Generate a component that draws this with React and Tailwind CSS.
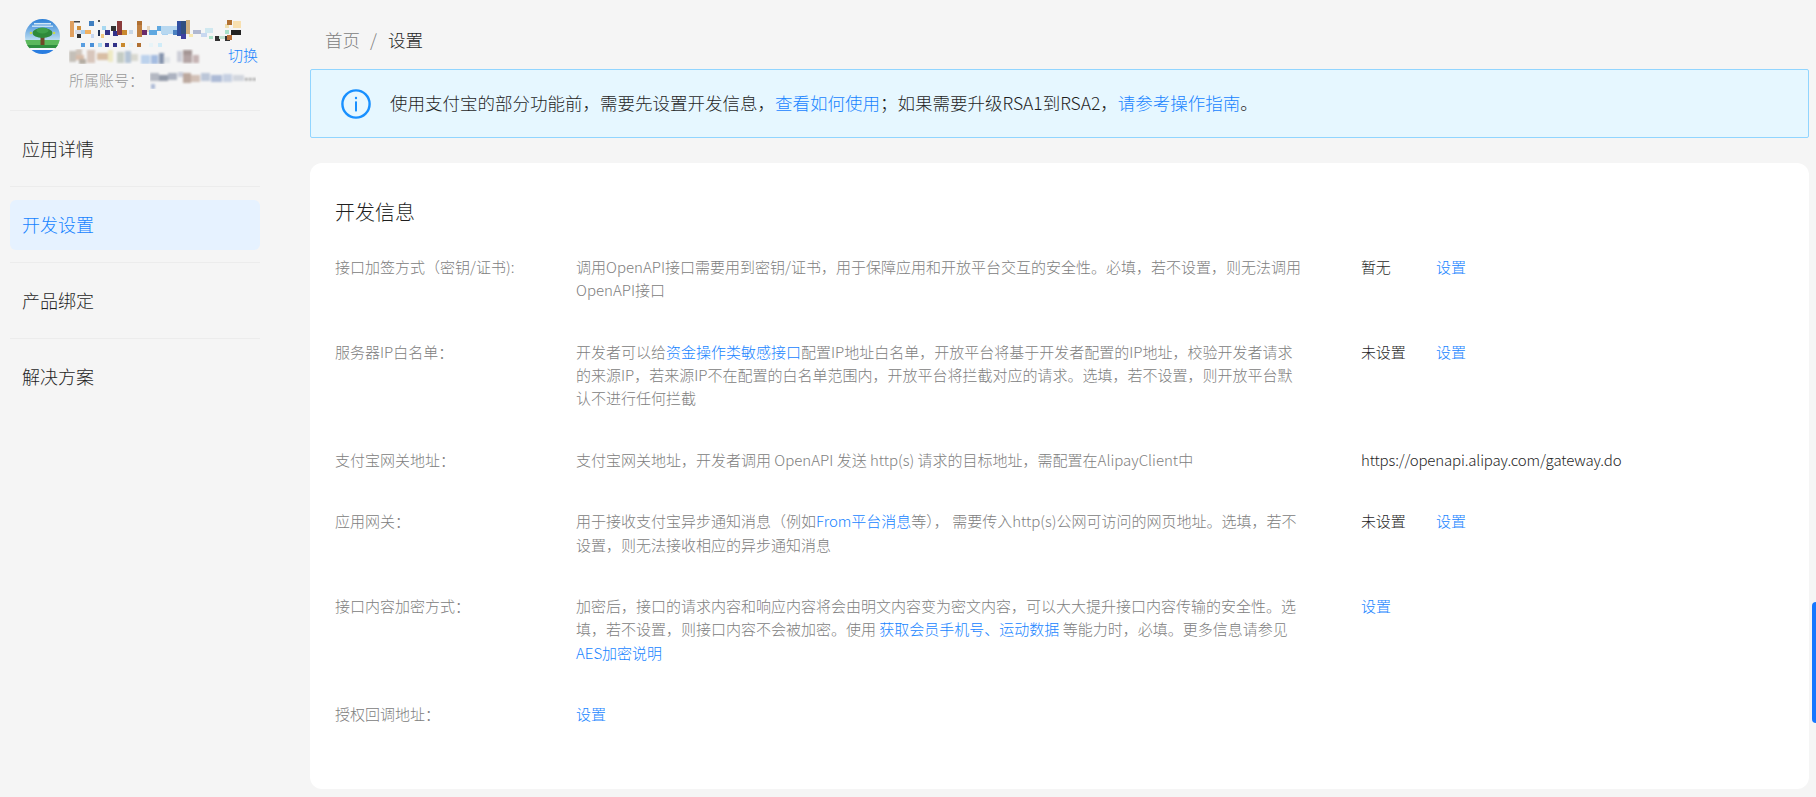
import React from 'react';

const nameCells = [
  [1, 1, 4, 16, '#e0a060'], [5, 1, 6, 1.5, '#444'], [8, 6, 4, 4, '#cf8f3a'], [8, 14, 4, 4, '#333'], [6, 10, 6, 4, '#d8dde8'],
  [20, 1, 5, 5, '#3f7fc0'], [12, 10, 6, 4, '#a6cdee'], [16, 10, 6, 4, '#f0b060'], [22, 14, 3, 4, '#c8d8f0'],
  [29, 0, 2, 2, '#555'], [29, 10, 2, 6, '#223355'], [33, 6, 4, 4, '#a8d8f0'], [36, 10, 5, 5, '#333388'], [32, 14, 3, 4, '#f0c880'],
  [42, 6, 5, 5, '#333'], [44, 11, 5, 5, '#33338a'], [48, 1, 5, 10, '#8a3a3a'], [48, 10, 5, 5, '#8a3a3a'], [53, 10, 5, 5, '#c9892f'],
  [60, 10, 4, 4, '#c8d8e8'], [68, 1, 5, 5, '#b07030'], [68, 5, 5, 12, '#c08040'], [73, 10, 5, 5, '#6a2a6a'], [78, 6, 3, 6, '#e8d8c0'],
  [80, 10, 8, 5, '#60a8e0'], [88, 6, 5, 5, '#60a8e0'], [93, 10, 6, 5, '#a8d0f0'], [98, 6, 4, 4, '#e8f0c8'],
  [92, 6, 16, 8, '#b8d8f0'], [104, 10, 4, 5, '#4a80c0'], [108, 1, 5, 15, '#3050a0'], [112, 1, 5, 16, '#305080'], [117, 0, 4, 14, '#d0b080'],
  [112, 14, 5, 5, '#4040a0'], [120, 14, 4, 3, '#f8e8b0'], [124, 10, 8, 4, '#b0b8d0'], [132, 13, 6, 4, '#c8d8f0'], [136, 8, 8, 5, '#d0e8f0'],
  [140, 16, 4, 3, '#a8e0c8'], [146, 16, 5, 5, '#333'], [150, 16, 8, 3, '#c0e0d0'], [156, 16, 5, 5, '#333'], [156, 4, 4, 4, '#f0e0b0'],
  [156, 10, 4, 4, '#a8e0c8'], [158, 0, 5, 5, '#b07030'], [162, 10, 10, 5, '#222'], [158, 15, 5, 5, '#b87038'], [164, 1, 8, 7, '#f8e0b0'],
  [12, 23, 4, 4, '#5a9ee0'], [21, 23, 4, 4, '#4a90d8'], [29, 23, 4, 4, '#a8d8f0'], [36, 23, 4, 4, '#333388'], [44, 23, 4, 4, '#333388'],
  [52, 23, 4, 4, '#c9892f'], [60, 23, 4, 4, '#e8f4f8'], [68, 23, 4, 4, '#b07030'], [80, 23, 4, 4, '#e8f4f8'], [89, 23, 4, 4, '#d0ecf8'],
];

const idCells = [
  [0, 2, 7, 11, '#c4bfb8'], [7, 0, 6, 6, '#cfc5bb'], [7, 6, 8, 5, '#d8bca8'], [10, 10, 7, 5, '#b4aca2'], [18, 1, 8, 13, '#d8c6bc'],
  [28, 4, 11, 7, '#d8bea4'], [39, 1, 5, 12, '#eeeac4'], [48, 3, 7, 11, '#c4ccc4'], [56, 2, 6, 12, '#b4c4d6'], [62, 5, 7, 7, '#d8d8d0'],
  [72, 6, 9, 9, '#bcd2ec'], [82, 6, 7, 9, '#a4bce0'], [90, 4, 5, 11, '#8694ae'], [95, 8, 6, 6, '#e0e4e8'], [108, 2, 5, 11, '#cecfd8'],
  [114, 1, 9, 6, '#a49694'], [114, 6, 9, 8, '#b4a4a4'], [124, 6, 6, 8, '#c6b4b4'],
];

const accountCells = [
  [0, 2, 9, 8, '#b4b8c2'], [9, 4, 9, 6, '#929aa8'], [18, 2, 9, 7, '#acb2c0'], [28, 1, 5, 5, '#c8ccd8'], [33, 2, 8, 10, '#bca89e'],
  [41, 4, 9, 7, '#d2c0b6'], [51, 2, 9, 8, '#bcc6d8'], [61, 4, 11, 7, '#acbad6'], [73, 3, 9, 8, '#c6d0e2'], [83, 4, 11, 6, '#d2d6de'],
  [95, 7, 2.5, 2.5, '#999'], [99, 7, 2.5, 2.5, '#999'], [103, 7, 2.5, 2.5, '#999'], [1, 13, 4, 5, '#acbad6'],
];

function Mosaic({ cells, w, h, blur = 0.7, id }) {
  return (
    <svg width={w} height={h} viewBox={`0 0 ${w} ${h}`} className="block shrink-0">
      <filter id={id}>
        <feGaussianBlur stdDeviation={blur} />
      </filter>
      <g filter={`url(#${id})`}>
        {cells.map((c, i) => (
          <rect key={i} x={c[0]} y={c[1]} width={c[2]} height={c[3]} fill={c[4]} />
        ))}
      </g>
    </svg>
  );
}

function Avatar() {
  return (
    <svg width="35" height="35" viewBox="0 0 35 35" className="block shrink-0">
      <defs>
        <clipPath id="av">
          <circle cx="17.5" cy="17.5" r="17.5" />
        </clipPath>
        <linearGradient id="sky" x1="0" y1="0" x2="0" y2="1">
          <stop offset="0" stopColor="#2c7fd6" />
          <stop offset="1" stopColor="#cfeaf5" />
        </linearGradient>
      </defs>
      <g clipPath="url(#av)">
        <rect width="35" height="24" fill="url(#sky)" />
        <rect y="21" width="35" height="8" fill="#5cb85c" />
        <rect y="26" width="35" height="4" fill="#2f8f3f" />
        <rect y="29" width="35" height="2" fill="#f4f8fa" />
        <rect y="31" width="35" height="4" fill="#2a7de0" />
        <rect x="9" y="4" width="17" height="1.5" fill="#d4e8f6" />
        <rect x="7" y="6.5" width="21" height="1.5" fill="#c4e0f4" />
        <rect x="15.5" y="17" width="4" height="9" fill="#6e4a26" />
        <ellipse cx="17.5" cy="14" rx="10" ry="5" fill="#2f8a3a" />
        <ellipse cx="17.5" cy="11.5" rx="6" ry="3" fill="#3fa04a" />
        <circle cx="6" cy="14" r="1.3" fill="#c8d850" />
        <circle cx="29" cy="14" r="1.3" fill="#c8d850" />
      </g>
    </svg>
  );
}

function InfoIcon() {
  return (
    <svg width="30" height="30" viewBox="0 0 30 30" className="block shrink-0">
      <circle cx="15" cy="15" r="13.6" fill="none" stroke="#1890ff" strokeWidth="2.4" />
      <rect x="13.9" y="7.8" width="2.2" height="2.4" rx="1" fill="#1890ff" />
      <rect x="14" y="12.4" width="2" height="10" fill="#1890ff" />
    </svg>
  );
}

const navItems = ['应用详情', '开发设置', '产品绑定', '解决方案'];

function Link({ children }) {
  return <a className="text-[#1784ff] cursor-pointer">{children}</a>;
}

function Row({ label, children, value, action }) {
  return (
    <div className="flex mb-[38.4px] text-[15px] leading-[23.2px]">
      <div className="w-[241px] shrink-0 text-[#808080]">{label}</div>
      <div className="w-[785px] shrink-0 text-[#808080]">{children}</div>
      <div className="flex text-[#1f1f1f]">
        {value && <div className="w-[75px] whitespace-nowrap tracking-[-0.01em]">{value}</div>}
        {action && <Link>设置</Link>}
      </div>
    </div>
  );
}

export default function App() {
  return (
    <div className="relative flex h-[797px] w-full overflow-hidden bg-[#f5f5f5] font-light font-['Noto_Sans_CJK_SC',sans-serif]">
      <aside className="w-[310px] shrink-0 pl-[10px]">
        <div className="w-[250px] h-[110px] pl-[15px] pt-[19px] flex gap-[9px]">
          <Avatar />
          <div className="flex-1 pt-[1px]">
            <Mosaic id="m1" cells={nameCells} w={174} h={28} />
            <div className="flex items-center h-[16px]">
              <Mosaic id="m2" cells={idCells} w={132} h={15} blur={0.8} />
              <span className="ml-auto mr-[2px] -mt-[3px] text-[15px] leading-[16px] text-[#1784ff]">切换</span>
            </div>
            <div className="flex items-center mt-[7px] h-[18px] gap-[6px]">
              <span className="text-[15px] leading-[18px] text-[#999999] whitespace-nowrap">所属账号：</span>
              <Mosaic id="m3" cells={accountCells} w={106} h={18} blur={0.9} />
            </div>
          </div>
        </div>
        <ul className="w-[250px]">
          {navItems.map((item, i) => (
            <li key={item} className="border-t border-[#ececec] py-[12.5px]">
              <div className={`h-[50px] flex items-center px-[12px] rounded-[6px] text-[18px] ${i === 1 ? 'bg-[#e6f2ff] text-[#1784ff]' : 'text-[#1f1f1f]'}`}>
                {item}
              </div>
            </li>
          ))}
        </ul>
      </aside>

      <main className="flex-1 pr-[7px]">
        <div className="h-[69px] pt-[28px] pl-[15px] flex text-[17.5px] leading-[24px]">
          <span className="text-[#808080]">首页</span>
          <span className="text-[#808080] ml-[10px] mr-[11px]">/</span>
          <span className="text-[#1f1f1f]">设置</span>
        </div>

        <div className="h-[69px] flex items-center pl-[30px] gap-[19px] bg-[#e6f7ff] border border-[#91d5ff] rounded-[2px] text-[17.5px] text-[#1f1f1f]">
          <InfoIcon />
          <p className="whitespace-nowrap">
            使用支付宝的部分功能前，需要先设置开发信息，<Link>查看如何使用</Link>；如果需要升级RSA1到RSA2，<Link>请参考操作指南</Link>。
          </p>
        </div>

        <section className="mt-[25px] h-[626px] bg-white rounded-[12px] pl-[25px] pt-[35px]">
          <h2 className="text-[20px] leading-[28px] text-[#1f1f1f] mb-[29px]">开发信息</h2>

          <Row label="接口加签方式（密钥/证书):" value="暂无" action>
            调用OpenAPI接口需要用到密钥/证书，用于保障应用和开放平台交互的安全性。必填，若不设置，则无法调用<br />
            OpenAPI接口
          </Row>
          <Row label="服务器IP白名单：" value="未设置" action>
            开发者可以给<Link>资金操作类敏感接口</Link>配置IP地址白名单，开放平台将基于开发者配置的IP地址，校验开发者请求<br />
            的来源IP，若来源IP不在配置的白名单范围内，开放平台将拦截对应的请求。选填，若不设置，则开放平台默<br />
            认不进行任何拦截
          </Row>
          <Row label="支付宝网关地址：" value="https://openapi.alipay.com/gateway.do">
            支付宝网关地址，开发者调用 OpenAPI 发送 http(s) 请求的目标地址，需配置在AlipayClient中
          </Row>
          <Row label="应用网关：" value="未设置" action>
            用于接收支付宝异步通知消息（例如<Link>From平台消息</Link>等）， 需要传入http(s)公网可访问的网页地址。选填，若不<br />
            设置，则无法接收相应的异步通知消息
          </Row>
          <Row label="接口内容加密方式：" action>
            加密后，接口的请求内容和响应内容将会由明文内容变为密文内容，可以大大提升接口内容传输的安全性。选<br />
            填，若不设置，则接口内容不会被加密。使用 <Link>获取会员手机号、运动数据</Link> 等能力时，必填。更多信息请参见<br />
            <Link>AES加密说明</Link>
          </Row>
          <Row label="授权回调地址：">
            <Link>设置</Link>
          </Row>
        </section>
      </main>

      <div className="absolute right-0 top-[602px] w-[4px] h-[121px] bg-[#1677ff] rounded-l-[6px]" />
    </div>
  );
}
